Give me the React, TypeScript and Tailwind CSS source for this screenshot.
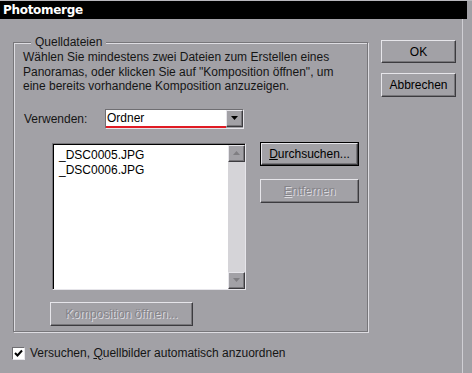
import { ReactNode } from 'react'

const font = "font-['Liberation_Sans',Arial,sans-serif] text-[12px]"

function RaisedButton({ children, width, height, disabled, focused }: { children: ReactNode; width: string; height: string; disabled?: boolean; focused?: boolean }) {
  return (
    <div className={`${width} ${height} ${focused ? 'border border-black' : ''}`}>
      <div
        className={`w-full h-full flex items-center justify-center border border-t-[#e6e5ea] border-l-[#e6e5ea] border-b-[#3c3b3f] border-r-[#3c3b3f] shadow-[inset_-1px_-1px_0_#77767a] ${
          disabled ? 'text-[#858489] [text-shadow:1px_1px_0_#dcdbe0]' : 'text-black'
        }`}
      >
        {children}
      </div>
    </div>
  )
}

function ArrowButton({ down, disabled }: { down: boolean; disabled?: boolean }) {
  return (
    <div className="w-[17px] h-[17px] bg-[#a2a1a6] flex items-center justify-center border border-t-[#e6e5ea] border-l-[#e6e5ea] border-b-[#3c3b3f] border-r-[#3c3b3f] shadow-[inset_-1px_-1px_0_#77767a]">
      <svg width="7" height="4" viewBox="0 0 7 4">
        <path d={down ? 'M0 0h7L3.5 4z' : 'M0 4h7L3.5 0z'} fill={disabled ? '#7f7e82' : '#000'} />
      </svg>
    </div>
  )
}

export default function App() {
  return (
    <div className={`w-[472px] h-[373px] bg-[#a2a1a6] flex flex-col ${font}`}>
      <div className="h-[1px] bg-[#b9b8bd]" />
      <div className="h-[18px] bg-black mr-[5px] flex items-center pl-[3px]">
        <span className="text-white font-bold text-[12px] leading-none font-['DejaVu_Sans',sans-serif] tracking-[-0.3px]">Photomerge</span>
      </div>
      <div className="flex-1 flex border-r-[5px] border-r-[#a2a1a6] shadow-[inset_-4px_0_0_#a2a1a6,inset_-5px_0_0_#d0cfd4]">
        <div className="flex flex-col">
          {/* Quelldateien group */}
          <div className="relative ml-[13px] mt-[23px] w-[355px] h-[290px] border border-[#77767a] shadow-[inset_1px_1px_0_#dedde2,1px_1px_0_#dedde2]">
            <span className="absolute -top-[9px] left-[17px] px-[4px] bg-[#a2a1a6] text-[#151515] leading-[16px]">
              Quelldateien
            </span>
            <div className="ml-[9px] mt-[7px] text-[#151515] leading-[14.5px]">
              <p>Wählen Sie mindestens zwei Dateien zum Erstellen eines</p>
              <p>Panoramas, oder klicken Sie auf "Komposition öffnen", um</p>
              <p>eine bereits vorhandene Komposition anzuzeigen.</p>
            </div>

            <div className="flex items-center ml-[10px] mt-[15px]">
              <span className="w-[81px] text-[#151515]">Verwenden:</span>
              <div className="w-[139px] h-[20px] flex border border-t-[#6f6e72] border-l-[#6f6e72] border-b-[#e6e5ea] border-r-[#e6e5ea]">
                <div className="flex-1 bg-white flex flex-col">
                  <span className="flex-1 pl-[1px] leading-[16px] text-black">Ordner</span>
                  <div className="h-[2px] bg-[#e01b24]" />
                </div>
                <ArrowButton down />
              </div>
            </div>

            <div className="flex mt-[14px] ml-[38px]">
              <div className="w-[194px] h-[147px] flex border border-t-[#77767a] border-l-[#77767a] border-b-[#e6e5ea] border-r-[#e6e5ea]">
                <div className="flex-1 flex border-t border-l border-t-black border-l-black">
                  <div className="flex-1 bg-white pl-[5px] pt-[3px] leading-[15px] text-black">
                    <div>_DSC0005.JPG</div>
                    <div>_DSC0006.JPG</div>
                  </div>
                  <div className="w-[17px] bg-[#d5d4d8] flex flex-col justify-between">
                    <ArrowButton down={false} disabled />
                    <ArrowButton down disabled />
                  </div>
                </div>
              </div>
              <div className="flex flex-col gap-[13px] ml-[14px] mt-[-1px]">
                <RaisedButton width="w-[99px]" height="h-[24px]" focused>
                  <span>
                    <span className="underline">D</span>urchsuchen...
                  </span>
                </RaisedButton>
                <RaisedButton width="w-[99px]" height="h-[24px]" disabled>
                  <span>
                    <span className="underline">E</span>ntfernen
                  </span>
                </RaisedButton>
              </div>
            </div>

            <div className="ml-[36px] mt-[12px]">
              <RaisedButton width="w-[143px]" height="h-[24px]" disabled>
                Komposition öffnen...
              </RaisedButton>
            </div>
          </div>

          <div className="flex items-center ml-[12px] mt-[12px]">
            <div className="w-[13px] h-[13px] bg-white border border-t-[#6f6e72] border-l-[#6f6e72] border-b-[#e6e5ea] border-r-[#e6e5ea] flex items-center justify-center">
              <svg width="9" height="9" viewBox="0 0 9 9">
                <path d="M1 4l2.5 2.5L8 1.5" stroke="#000" strokeWidth="2" fill="none" />
              </svg>
            </div>
            <span className="ml-[5px] text-[#151515]">
              Versuchen, <span className="underline">Q</span>uellbilder automatisch anzuordnen
            </span>
          </div>
        </div>

        <div className="flex flex-col gap-[10px] ml-[13px] mt-[21px]">
          <RaisedButton width="w-[75px]" height="h-[23px]">OK</RaisedButton>
          <RaisedButton width="w-[75px]" height="h-[24px]">Abbrechen</RaisedButton>
        </div>
      </div>
    </div>
  )
}
